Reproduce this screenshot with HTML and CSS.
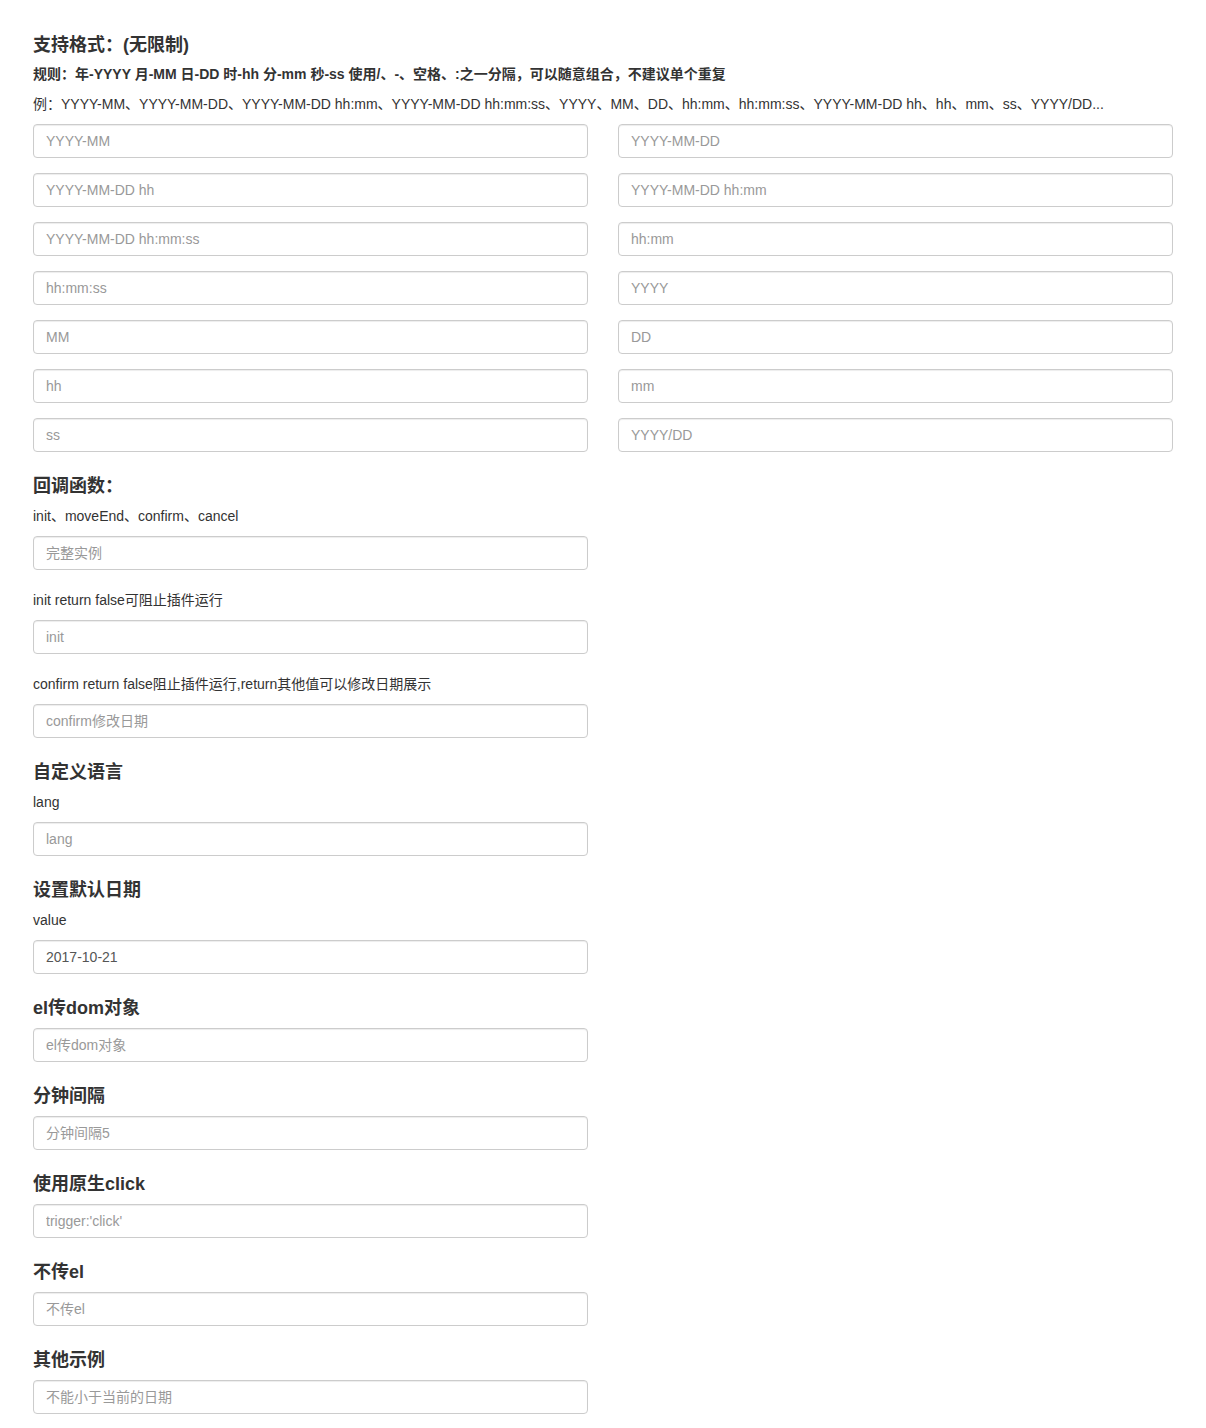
FILE: index.html
```html
<!DOCTYPE html>
<html lang="zh-CN">
<head>
    <meta charset="UTF-8">
    <meta name="viewport" content="width=device-width, initial-scale=1.0">
    <title>日期插件示例</title>
    <link rel="stylesheet" href="styles.css">
</head>
<body>
    <div class="container">
        <!-- Supported formats -->
        <h4 class="first">支持格式：(无限制)</h4>
        <h5 class="rule">规则：年-YYYY 月-MM 日-DD 时-hh 分-mm 秒-ss 使用/、-、空格、:之一分隔，可以随意组合，不建议单个重复</h5>
        <p class="example">例：YYYY-MM、YYYY-MM-DD、YYYY-MM-DD hh:mm、YYYY-MM-DD hh:mm:ss、YYYY、MM、DD、hh:mm、hh:mm:ss、YYYY-MM-DD hh、hh、mm、ss、YYYY/DD...</p>

        <div class="format-grid">
            <input class="form-control" type="text" placeholder="YYYY-MM">
            <input class="form-control" type="text" placeholder="YYYY-MM-DD">
            <input class="form-control" type="text" placeholder="YYYY-MM-DD hh">
            <input class="form-control" type="text" placeholder="YYYY-MM-DD hh:mm">
            <input class="form-control" type="text" placeholder="YYYY-MM-DD hh:mm:ss">
            <input class="form-control" type="text" placeholder="hh:mm">
            <input class="form-control" type="text" placeholder="hh:mm:ss">
            <input class="form-control" type="text" placeholder="YYYY">
            <input class="form-control" type="text" placeholder="MM">
            <input class="form-control" type="text" placeholder="DD">
            <input class="form-control" type="text" placeholder="hh">
            <input class="form-control" type="text" placeholder="mm">
            <input class="form-control" type="text" placeholder="ss">
            <input class="form-control" type="text" placeholder="YYYY/DD">
        </div>

        <!-- Callbacks -->
        <h4>回调函数：</h4>
        <p>init、moveEnd、confirm、cancel</p>
        <div class="half-row">
            <input class="form-control" type="text" placeholder="完整实例">
        </div>

        <p class="note">init return false可阻止插件运行</p>
        <div class="half-row">
            <input class="form-control" type="text" placeholder="init">
        </div>

        <p class="note">confirm return false阻止插件运行,return其他值可以修改日期展示</p>
        <div class="half-row">
            <input class="form-control" type="text" placeholder="confirm修改日期">
        </div>

        <!-- Language -->
        <h4>自定义语言</h4>
        <p>lang</p>
        <div class="half-row">
            <input class="form-control" type="text" placeholder="lang">
        </div>

        <!-- Default value -->
        <h4>设置默认日期</h4>
        <p>value</p>
        <div class="half-row">
            <input class="form-control" type="text" value="2017-10-21">
        </div>

        <h4>el传dom对象</h4>
        <div class="half-row">
            <input class="form-control" type="text" placeholder="el传dom对象">
        </div>

        <h4>分钟间隔</h4>
        <div class="half-row">
            <input class="form-control" type="text" placeholder="分钟间隔5">
        </div>

        <h4>使用原生click</h4>
        <div class="half-row">
            <input class="form-control" type="text" placeholder="trigger:'click'">
        </div>

        <h4>不传el</h4>
        <div class="half-row">
            <input class="form-control" type="text" placeholder="不传el">
        </div>

        <h4>其他示例</h4>
        <div class="half-row">
            <input class="form-control" type="text" placeholder="不能小于当前的日期">
        </div>
    </div>
</body>
</html>
```

FILE: styles.css
```css
/* Base */
body {
    margin: 0;
    font-family: "Liberation Sans", Arial, "Noto Sans CJK SC", sans-serif;
    font-size: 14px;
    line-height: 1.42857143;
    color: #333;
    background: #fff;
}

.container {
    width: 1140px;
    margin: 0 auto;
    padding: 26px 15px 40px;
}

/* Headings */
h4 {
    font-size: 18px;
    font-weight: bold;
    line-height: 19px;
    margin: 25px 0 10px; /* 15px group gap + 10px heading gap */
}

h4.first {
    margin-top: 10px;
}

h5.rule {
    font-size: 14px;
    font-weight: bold;
    line-height: 1.1;
    margin: 12px 0 0;
}

p {
    margin: 0 0 10px;
}

p.example {
    margin-top: 12px;
}

p.note {
    margin-top: 20px;
}

/* Format inputs, two columns */
.format-grid {
    display: grid;
    grid-template-columns: 1fr 1fr;
    column-gap: 30px;
    row-gap: 15px;
    margin-bottom: 15px;
}

/* Single input that takes the left half */
.half-row {
    display: grid;
    grid-template-columns: 1fr 1fr;
    column-gap: 30px;
    margin-bottom: 15px;
}

/* Bootstrap-like text input */
.form-control {
    display: block;
    box-sizing: border-box;
    width: 100%;
    height: 34px;
    padding: 6px 12px;
    font-family: inherit;
    font-size: 14px;
    line-height: 1.42857143;
    color: #555;
    background-color: #fff;
    border: 1px solid #ccc;
    border-radius: 4px;
    box-shadow: inset 0 1px 1px rgba(0, 0, 0, 0.075);
    outline: none;
}

.form-control::placeholder {
    color: #999;
    opacity: 1;
}
```
